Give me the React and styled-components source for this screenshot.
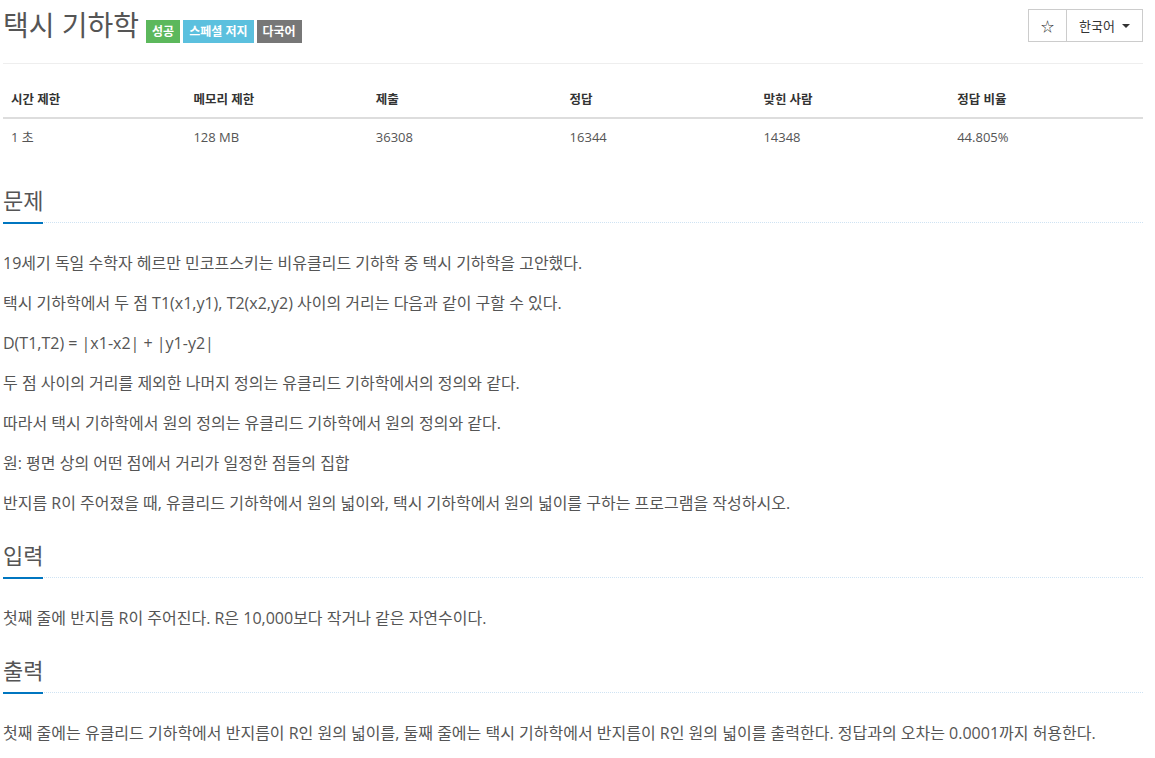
import React from "react";
import styled, { createGlobalStyle } from "styled-components";

const Global = createGlobalStyle`
  html, body { margin: 0; padding: 0; background: #fff; }
  body {
    font-family: "Open Sans", "Noto Sans CJK KR", sans-serif;
    color: #555;
    font-size: 16px;
  }
  * { box-sizing: border-box; }
`;

const Page = styled.div`
  width: 1140px;
  margin-left: 3px;
`;

const Header = styled.div`
  display: flex;
  justify-content: space-between;
  align-items: flex-start;
  padding-bottom: 19px;
  border-bottom: 1px solid #eee;
`;

const TitleLine = styled.div`
  display: flex;
  align-items: baseline;
  margin-top: 7px;
`;

const Title = styled.span`
  font-size: 28px;
  line-height: 37px;
  color: #555;
  font-weight: 400;
  margin-right: 7px;
`;

const Label = styled.span`
  display: inline-block;
  background: ${(p) => p.$bg};
  color: #fff;
  font-size: 12px;
  font-weight: 700;
  line-height: 23px;
  padding: 0 6px;
  margin-right: 3px;
`;

const BtnGroup = styled.div`
  display: flex;
  margin-top: 9px;
`;

const Btn = styled.button`
  display: flex;
  align-items: center;
  gap: 7px;
  height: 33px;
  padding: 0 ${(p) => p.$px || 12}px;
  border: 1px solid #ccc;
  margin-left: -1px;
  background: #fff;
  color: #333;
  font-family: "Open Sans", "Noto Sans CJK KR", sans-serif;
  font-size: 13px;
  cursor: pointer;
`;

const Caret = styled.span`
  display: inline-block;
  width: 0;
  height: 0;
  border-top: 4px solid #333;
  border-left: 4px solid transparent;
  border-right: 4px solid transparent;
`;

const Table = styled.table`
  width: 100%;
  border-collapse: collapse;
  margin-top: 17px;
  margin-bottom: 31px;
  font-size: 13px;
  table-layout: fixed;
`;

const Th = styled.th`
  text-align: left;
  font-weight: 700;
  color: #333;
  font-size: 12.5px;
  line-height: 20px;
  padding: 9px 8px 7px;
  border-bottom: 2px solid #ddd;
  width: ${(p) => p.$w};
`;

const Td = styled.td`
  line-height: 20px;
  padding: 8px;
  color: #555;
`;

const Section = styled.section`
  margin-top: 26px;
`;

const Headline = styled.div`
  display: flex;
  border-bottom: 1px dotted #cfe3f3;
`;

const H2 = styled.h2`
  margin: 0 0 -2px;
  font-size: 22px;
  line-height: 28px;
  font-weight: 400;
  color: #555;
  padding-bottom: 8px;
  border-bottom: 2px solid #0076c0;
`;

const Body = styled.div`
  margin-top: 28px;
  p {
    margin: 0 0 16px;
    line-height: 24px;
    font-size: 16px;
  }
  p:last-child { margin-bottom: 0; }
`;

const stats = [
  ["시간 제한", "1 초", "16%"],
  ["메모리 제한", "128 MB", "16%"],
  ["제출", "36308", "17%"],
  ["정답", "16344", "17%"],
  ["맞힌 사람", "14348", "17%"],
  ["정답 비율", "44.805%", "17%"],
];

const sections = [
  {
    title: "문제",
    lines: [
      "19세기 독일 수학자 헤르만 민코프스키는 비유클리드 기하학 중 택시 기하학을 고안했다.",
      "택시 기하학에서 두 점 T1(x1,y1), T2(x2,y2) 사이의 거리는 다음과 같이 구할 수 있다.",
      "D(T1,T2) = |x1-x2| + |y1-y2|",
      "두 점 사이의 거리를 제외한 나머지 정의는 유클리드 기하학에서의 정의와 같다.",
      "따라서 택시 기하학에서 원의 정의는 유클리드 기하학에서 원의 정의와 같다.",
      "원: 평면 상의 어떤 점에서 거리가 일정한 점들의 집합",
      "반지름 R이 주어졌을 때, 유클리드 기하학에서 원의 넓이와, 택시 기하학에서 원의 넓이를 구하는 프로그램을 작성하시오.",
    ],
  },
  {
    title: "입력",
    lines: ["첫째 줄에 반지름 R이 주어진다. R은 10,000보다 작거나 같은 자연수이다."],
  },
  {
    title: "출력",
    lines: [
      "첫째 줄에는 유클리드 기하학에서 반지름이 R인 원의 넓이를, 둘째 줄에는 택시 기하학에서 반지름이 R인 원의 넓이를 출력한다. 정답과의 오차는 0.0001까지 허용한다.",
    ],
  },
];

export default function App() {
  return (
    <>
      <Global />
      <Page>
        <Header>
          <TitleLine>
            <Title>택시 기하학</Title>
            <Label $bg="#5cb85c">성공</Label>
            <Label $bg="#5bc0de">스페셜 저지</Label>
            <Label $bg="#777">다국어</Label>
          </TitleLine>
          <BtnGroup>
            <Btn $px={12}>☆</Btn>
            <Btn>
              한국어 <Caret />
            </Btn>
          </BtnGroup>
        </Header>
        <Table>
          <thead>
            <tr>
              {stats.map(([h, , w]) => (
                <Th key={h} $w={w}>
                  {h}
                </Th>
              ))}
            </tr>
          </thead>
          <tbody>
            <tr>
              {stats.map(([h, v]) => (
                <Td key={h}>{v}</Td>
              ))}
            </tr>
          </tbody>
        </Table>
        {sections.map((s) => (
          <Section key={s.title}>
            <Headline>
              <H2>{s.title}</H2>
            </Headline>
            <Body>
              {s.lines.map((l) => (
                <p key={l}>{l}</p>
              ))}
            </Body>
          </Section>
        ))}
      </Page>
    </>
  );
}
